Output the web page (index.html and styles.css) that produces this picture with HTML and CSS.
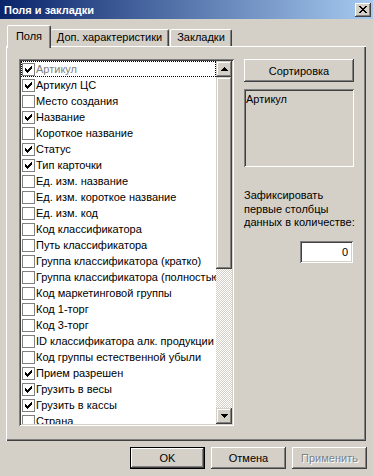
FILE: index.html
```html
<!DOCTYPE html>
<html lang="ru">
<head>
  <meta charset="UTF-8">
  <title>Поля и закладки</title>
  <link rel="stylesheet" href="styles.css">
</head>
<body>
  <div class="titlebar">
    <span class="title">Поля и закладки</span>
    <div class="close">
      <svg width="8" height="7" viewBox="0 0 8 7" shape-rendering="crispEdges"><path d="M0 0h2v1H0z M6 0h2v1H6z M1 1h2v1H1z M5 1h2v1H5z M2 2h4v1H2z M3 3h2v1H3z M2 4h4v1H2z M1 5h2v1H1z M5 5h2v1H5z M0 6h2v1H0z M6 6h2v1H6z"/></svg>
    </div>
  </div>

  <div class="dialog">
    <div class="tabs">
      <div class="tab active">Поля</div>
      <div class="tab tab-wide">Доп. характеристики</div>
      <div class="tab tab-mid">Закладки</div>
    </div>

    <div class="panel">
      <div class="list">
        <div class="rows">
          <div class="row focus"><span class="box on"></span><span class="label">Артикул</span></div>
          <div class="row"><span class="box on"></span><span class="label">Артикул ЦС</span></div>
          <div class="row"><span class="box"></span><span class="label">Место создания</span></div>
          <div class="row"><span class="box on"></span><span class="label">Название</span></div>
          <div class="row"><span class="box"></span><span class="label">Короткое название</span></div>
          <div class="row"><span class="box on"></span><span class="label">Статус</span></div>
          <div class="row"><span class="box on"></span><span class="label">Тип карточки</span></div>
          <div class="row"><span class="box"></span><span class="label">Ед. изм. название</span></div>
          <div class="row"><span class="box"></span><span class="label">Ед. изм. короткое название</span></div>
          <div class="row"><span class="box"></span><span class="label">Ед. изм. код</span></div>
          <div class="row"><span class="box"></span><span class="label">Код классификатора</span></div>
          <div class="row"><span class="box"></span><span class="label">Путь классификатора</span></div>
          <div class="row"><span class="box"></span><span class="label">Группа классификатора (кратко)</span></div>
          <div class="row"><span class="box"></span><span class="label">Группа классификатора (полностью)</span></div>
          <div class="row"><span class="box"></span><span class="label">Код маркетинговой группы</span></div>
          <div class="row"><span class="box"></span><span class="label">Код 1-торг</span></div>
          <div class="row"><span class="box"></span><span class="label">Код 3-торг</span></div>
          <div class="row"><span class="box"></span><span class="label">ID классификатора алк. продукции</span></div>
          <div class="row"><span class="box"></span><span class="label">Код группы естественной убыли</span></div>
          <div class="row"><span class="box on"></span><span class="label">Прием разрешен</span></div>
          <div class="row"><span class="box on"></span><span class="label">Грузить в весы</span></div>
          <div class="row"><span class="box on"></span><span class="label">Грузить в кассы</span></div>
          <div class="row"><span class="box"></span><span class="label">Страна</span></div>
        </div>
        <div class="scroll">
          <div class="sbtn">
            <svg width="7" height="4" viewBox="0 0 7 4" shape-rendering="crispEdges"><path d="M3 0h1v1H3z M2 1h3v1H2z M1 2h5v1H1z M0 3h7v1H0z"/></svg>
          </div>
          <div class="thumb"></div>
          <div class="track"></div>
          <div class="sbtn">
            <svg width="7" height="4" viewBox="0 0 7 4" shape-rendering="crispEdges"><path d="M0 0h7v1H0z M1 1h5v1H1z M2 2h3v1H2z M3 3h1v1H3z"/></svg>
          </div>
        </div>
      </div>

      <div class="side">
        <div class="btn sort">Сортировка</div>
        <div class="sorted">Артикул</div>
        <div class="fix-label">Зафиксировать<br>первые столбцы<br>данных в количестве:</div>
        <div class="field">0</div>
      </div>
    </div>

    <div class="buttons">
      <div class="btn default">OK</div>
      <div class="btn">Отмена</div>
      <div class="btn disabled">Применить</div>
    </div>
  </div>
</body>
</html>
```

FILE: styles.css
```css
* {
  margin: 0;
  padding: 0;
  box-sizing: border-box;
}

body {
  width: 373px;
  height: 476px;
  overflow: hidden;
  background: #d4d0c8;
  font-family: "Liberation Sans", Arial, sans-serif;
  font-size: 11px;
  color: #000;
}

/* Title bar */

.titlebar {
  height: 19px;
  display: flex;
  align-items: center;
  justify-content: space-between;
  padding: 0 2px 0 4px;
  background: linear-gradient(to right, #0a246a, #a6caf0);
}

.title {
  color: #fff;
  font-weight: bold;
  font-size: 11px;
}

.close {
  width: 16px;
  height: 14px;
  display: flex;
  align-items: center;
  justify-content: center;
  background: #d4d0c8;
  box-shadow: inset -1px -1px #404040, inset 1px 1px #fff, inset -2px -2px #808080;
}

/* Dialog */

.dialog {
  padding: 6px 6px 0 6px;
}

.tabs {
  height: 21px;
  display: flex;
  align-items: flex-end;
  padding-left: 1px;
}

.tab {
  height: 17px;
  line-height: 15px;
  text-align: center;
  border-top: 1px solid #fff;
  border-left: 1px solid #fff;
  border-right: 1px solid #404040;
  border-radius: 2px 2px 0 0;
  box-shadow: inset -1px 0 #808080;
}

.tab.active {
  width: 44px;
  height: 23px;
  line-height: 20px;
  margin-bottom: -2px;
  position: relative;
  z-index: 1;
  background: #d4d0c8;
}

.tab-wide {
  width: 118px;
  border-left: none;
}

.tab-mid {
  width: 62px;
  margin-left: 1px;
}

.panel {
  width: 360px;
  height: 395px;
  display: flex;
  gap: 10px;
  padding: 13px 12px 0 13px;
  box-shadow: inset 1px 1px #fff, inset -1px -1px #404040, inset -2px -2px #808080;
}

/* Field list */

.list {
  width: 215px;
  height: 367px;
  display: flex;
  padding: 2px;
  background: #fff;
  box-shadow: inset 1px 1px #808080, inset -1px -1px #fff, inset 2px 2px #404040, inset -2px -2px #d4d0c8;
}

.rows {
  flex: 1;
  overflow: hidden;
}

.row {
  height: 16px;
  display: flex;
  align-items: center;
  white-space: nowrap;
  padding-left: 1px;
}

.row.focus {
  outline: 1px dotted #000;
  outline-offset: -1px;
}

.row.focus .label {
  color: #808080;
}

.box {
  width: 13px;
  height: 13px;
  flex: none;
  margin-right: 1px;
  border: 1px solid #808080;
  background: #fff;
}

.box.on {
  background: #fff url("data:image/svg+xml,%3Csvg xmlns='http://www.w3.org/2000/svg' width='7' height='7' shape-rendering='crispEdges'%3E%3Cpath d='M0 2h1v3H0z M1 3h1v3H1z M2 4h1v3H2z M3 3h1v3H3z M4 2h1v3H4z M5 1h1v3H5z M6 0h1v3H6z'/%3E%3C/svg%3E") no-repeat 2px 2px;
}

.scroll {
  width: 16px;
  display: flex;
  flex-direction: column;
}

.sbtn {
  height: 16px;
  display: flex;
  align-items: center;
  justify-content: center;
  background: #d4d0c8;
  box-shadow: inset -1px -1px #404040, inset 1px 1px #d4d0c8, inset -2px -2px #808080, inset 2px 2px #fff;
}

.thumb {
  height: 192px;
  background: #d4d0c8;
  box-shadow: inset -1px -1px #404040, inset 1px 1px #d4d0c8, inset -2px -2px #808080, inset 2px 2px #fff;
}

.track {
  flex: 1;
  background: repeating-conic-gradient(#fff 0 25%, #d4d0c8 0 50%) 0 0 / 2px 2px;
}

/* Right column */

.side {
  width: 110px;
  display: flex;
  flex-direction: column;
}

.btn {
  width: 75px;
  height: 22px;
  display: flex;
  align-items: center;
  justify-content: center;
  background: #d4d0c8;
  box-shadow: inset -1px -1px #404040, inset 1px 1px #fff, inset -2px -2px #808080;
}

.sort {
  width: 110px;
  height: 23px;
}

.sorted {
  height: 78px;
  margin-top: 7px;
  padding: 4px 2px;
  box-shadow: inset 1px 1px #808080, inset -1px -1px #fff, inset 2px 2px #404040, inset -2px -2px #d4d0c8;
}

.fix-label {
  margin-top: 22px;
  line-height: 13.5px;
  white-space: nowrap;
}

.field {
  width: 53px;
  height: 22px;
  margin: 11px 1px 0 0;
  align-self: flex-end;
  padding-right: 5px;
  line-height: 22px;
  text-align: right;
  background: #fff;
  box-shadow: inset 1px 1px #808080, inset -1px -1px #fff, inset 2px 2px #404040, inset -2px -2px #d4d0c8;
}

/* Bottom buttons */

.buttons {
  display: flex;
  justify-content: flex-end;
  gap: 6px;
  margin-top: 6px;
}

.btn.default {
  border: 1px solid #000;
}

.btn.disabled {
  color: #808080;
  text-shadow: 1px 1px #fff;
}
```
